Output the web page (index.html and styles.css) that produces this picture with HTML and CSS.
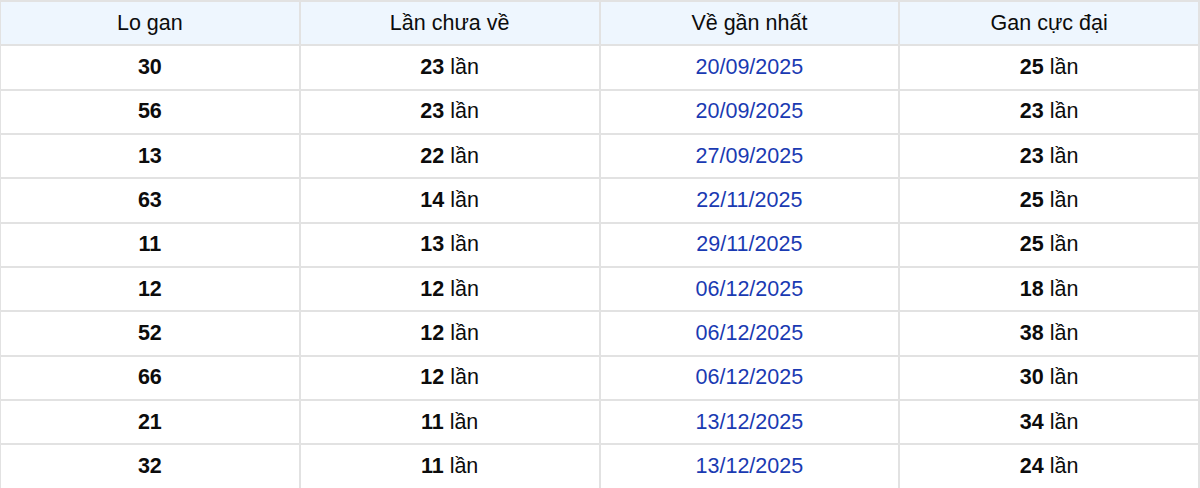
FILE: index.html
```html
<!DOCTYPE html>
<html lang="vi">
<head>
<meta charset="utf-8">
<link rel="stylesheet" href="styles.css">
</head>
<body>
<table class="gan-table">
  <thead>
    <tr><th>Lo gan</th><th>Lần chưa về</th><th>Về gần nhất</th><th>Gan cực đại</th></tr>
  </thead>
  <tbody>
    <tr><td class="num">30</td><td><b>23</b> lần</td><td class="date">20/09/2025</td><td><b>25</b> lần</td></tr>
    <tr><td class="num">56</td><td><b>23</b> lần</td><td class="date">20/09/2025</td><td><b>23</b> lần</td></tr>
    <tr><td class="num">13</td><td><b>22</b> lần</td><td class="date">27/09/2025</td><td><b>23</b> lần</td></tr>
    <tr><td class="num">63</td><td><b>14</b> lần</td><td class="date">22/11/2025</td><td><b>25</b> lần</td></tr>
    <tr><td class="num">11</td><td><b>13</b> lần</td><td class="date">29/11/2025</td><td><b>25</b> lần</td></tr>
    <tr><td class="num">12</td><td><b>12</b> lần</td><td class="date">06/12/2025</td><td><b>18</b> lần</td></tr>
    <tr><td class="num">52</td><td><b>12</b> lần</td><td class="date">06/12/2025</td><td><b>38</b> lần</td></tr>
    <tr><td class="num">66</td><td><b>12</b> lần</td><td class="date">06/12/2025</td><td><b>30</b> lần</td></tr>
    <tr><td class="num">21</td><td><b>11</b> lần</td><td class="date">13/12/2025</td><td><b>34</b> lần</td></tr>
    <tr><td class="num">32</td><td><b>11</b> lần</td><td class="date">13/12/2025</td><td><b>24</b> lần</td></tr>
  </tbody>
</table>
</body>
</html>
```
FILE: styles.css
```css
html, body {
  margin: 0;
  padding: 0;
  background: #ffffff;
}
body {
  font-family: "Liberation Sans", Arial, sans-serif;
  color: #0c0c0c;
}
.gan-table {
  width: 1201px;
  margin-left: -1px;
  border-collapse: collapse;
  table-layout: fixed;
  font-size: 21.5px;
}
.gan-table th,
.gan-table td {
  border: 2px solid #e2e2e2;
  height: 42.33px;
  padding: 0;
  text-align: center;
  vertical-align: middle;
}
.gan-table th {
  background: #eef6fe;
  font-weight: normal;
}
.gan-table td b,
.gan-table td.num {
  font-weight: bold;
}
.gan-table td.date {
  color: #1a3ab2;
}
```
